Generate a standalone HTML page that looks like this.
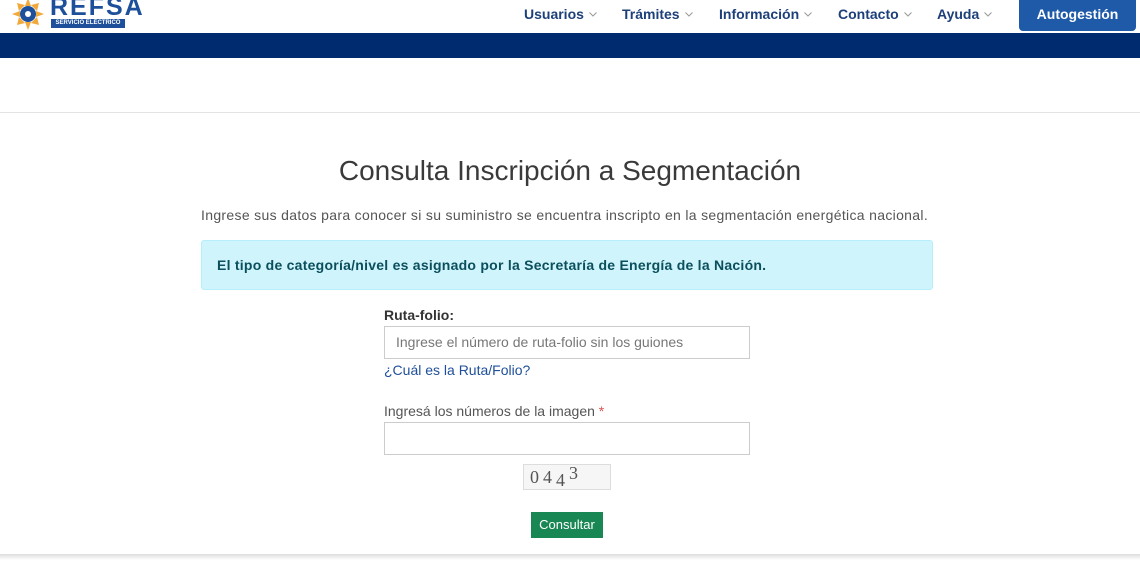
<!DOCTYPE html>
<html><head><meta charset="utf-8"><style>
*{box-sizing:border-box;margin:0;padding:0}
body{width:1140px;height:570px;overflow:hidden;background:#fff;font-family:"Liberation Sans",sans-serif;color:#444;position:relative}
.nav{position:absolute;top:0;left:0;right:0;height:33px;background:#fff}
.band{position:absolute;top:33px;left:0;right:0;height:25px;background:#002b6e}
.logo{position:absolute;left:10px;top:-4px}
.refsa{position:absolute;left:50px;top:-7px;font-size:25px;font-weight:bold;color:#1d4f9b;letter-spacing:2px}
.sub{position:absolute;left:51px;top:19px;width:74px;height:9px;background:#1d4f9b;color:#fff;font-size:6px;line-height:9px;text-align:center;font-weight:bold}
.menu{position:absolute;top:6px;font-size:14px;font-weight:bold;color:#1d3f7a}
.menu svg{margin-left:5px;vertical-align:2px}
.auto{position:absolute;left:1019px;top:0;width:117px;height:31px;background:#1f5aa8;border-radius:0 0 4px 4px;color:#fff;font-weight:bold;font-size:14px;text-align:center;line-height:28px}
.hr{position:absolute;top:112px;left:0;right:0;height:1px;background:#e3e3e3}
.foot{position:absolute;top:554px;left:0;right:0;height:6px;background:linear-gradient(#ddd,#fff)}
.abs{position:absolute;white-space:nowrap}
</style></head><body>
<div class="nav">
<svg class="logo" width="36" height="36" viewBox="0 0 36 36"><g fill="#f2a93b"><polygon points="18,2 21,10 15,10"/><polygon points="34,18 26,21 26,15"/><polygon points="18,34 15,26 21,26"/><polygon points="2,18 10,15 10,21"/><polygon points="29,7 27,15 21,9"/><polygon points="29,29 21,27 27,21"/><polygon points="7,29 9,21 15,27"/><polygon points="7,7 15,9 9,15"/></g><circle cx="18" cy="18" r="8" fill="#1d4f9b"/><circle cx="18" cy="18" r="3" fill="#fff"/></svg>
<div class="refsa">REFSA</div>
<div class="sub">SERVICIO ELÉCTRICO</div>
<div class="menu" style="left:524px">Usuarios<svg width="8" height="5" viewBox="0 0 8 5"><path d="M0.5 0.5L4 4L7.5 0.5" fill="none" stroke="#999" stroke-width="1"/></svg></div>
<div class="menu" style="left:622px">Trámites<svg width="8" height="5" viewBox="0 0 8 5"><path d="M0.5 0.5L4 4L7.5 0.5" fill="none" stroke="#999" stroke-width="1"/></svg></div>
<div class="menu" style="left:719px">Información<svg width="8" height="5" viewBox="0 0 8 5"><path d="M0.5 0.5L4 4L7.5 0.5" fill="none" stroke="#999" stroke-width="1"/></svg></div>
<div class="menu" style="left:838px">Contacto<svg width="8" height="5" viewBox="0 0 8 5"><path d="M0.5 0.5L4 4L7.5 0.5" fill="none" stroke="#999" stroke-width="1"/></svg></div>
<div class="menu" style="left:937px">Ayuda<svg width="8" height="5" viewBox="0 0 8 5"><path d="M0.5 0.5L4 4L7.5 0.5" fill="none" stroke="#999" stroke-width="1"/></svg></div>
<div class="auto">Autogestión</div>
</div>
<div class="band"></div>
<div class="hr"></div>
<div class="abs" style="left:0;width:1140px;text-align:center;top:155px;font-size:28px;color:#3a3a3a">Consulta Inscripción a Segmentación</div>
<div class="abs" style="left:201px;top:207px;font-size:14px;color:#555;letter-spacing:0.32px">Ingrese sus datos para conocer si su suministro se encuentra inscripto en la segmentación energética nacional.</div>
<div class="abs" style="left:201px;top:240px;width:732px;height:50px;background:#cff4fc;border:1px solid #b6effb;border-radius:3px"></div>
<div class="abs" style="left:217px;top:257px;font-size:14px;font-weight:bold;color:#0b4f5c;letter-spacing:0.25px">El tipo de categoría/nivel es asignado por la Secretaría de Energía de la Nación.</div>
<div class="abs" style="left:384px;top:307px;font-size:14px;font-weight:bold;color:#333">Ruta-folio:</div>
<div class="abs" style="left:384px;top:326px;width:366px;height:33px;border:1px solid #ccc;padding:7px 11px;font-size:14px;color:#777">Ingrese el número de ruta-folio sin los guiones</div>
<div class="abs" style="left:384px;top:362px;font-size:14px;color:#1f4f9a">¿Cuál es la Ruta/Folio?</div>
<div class="abs" style="left:384px;top:403px;font-size:14px;color:#555">Ingresá los números de la imagen <span style="color:#d9534f">*</span></div>
<div class="abs" style="left:384px;top:422px;width:366px;height:33px;border:1px solid #ccc"></div>
<div class="abs" style="left:523px;top:464px;width:88px;height:26px;border:1px solid #ddd;background:#f6f6f6;font-family:'Liberation Serif',serif;font-size:18px;color:#555;padding:0 6px;letter-spacing:4px;line-height:24px">0<span>4</span><span style="position:relative;top:3px">4</span><span style="position:relative;top:-4px">3</span></div>
<div class="abs" style="left:531px;top:512px;width:72px;height:26px;background:#198754;color:#fff;font-size:13px;text-align:center;line-height:26px">Consultar</div>
<div class="foot"></div>
</body></html>
